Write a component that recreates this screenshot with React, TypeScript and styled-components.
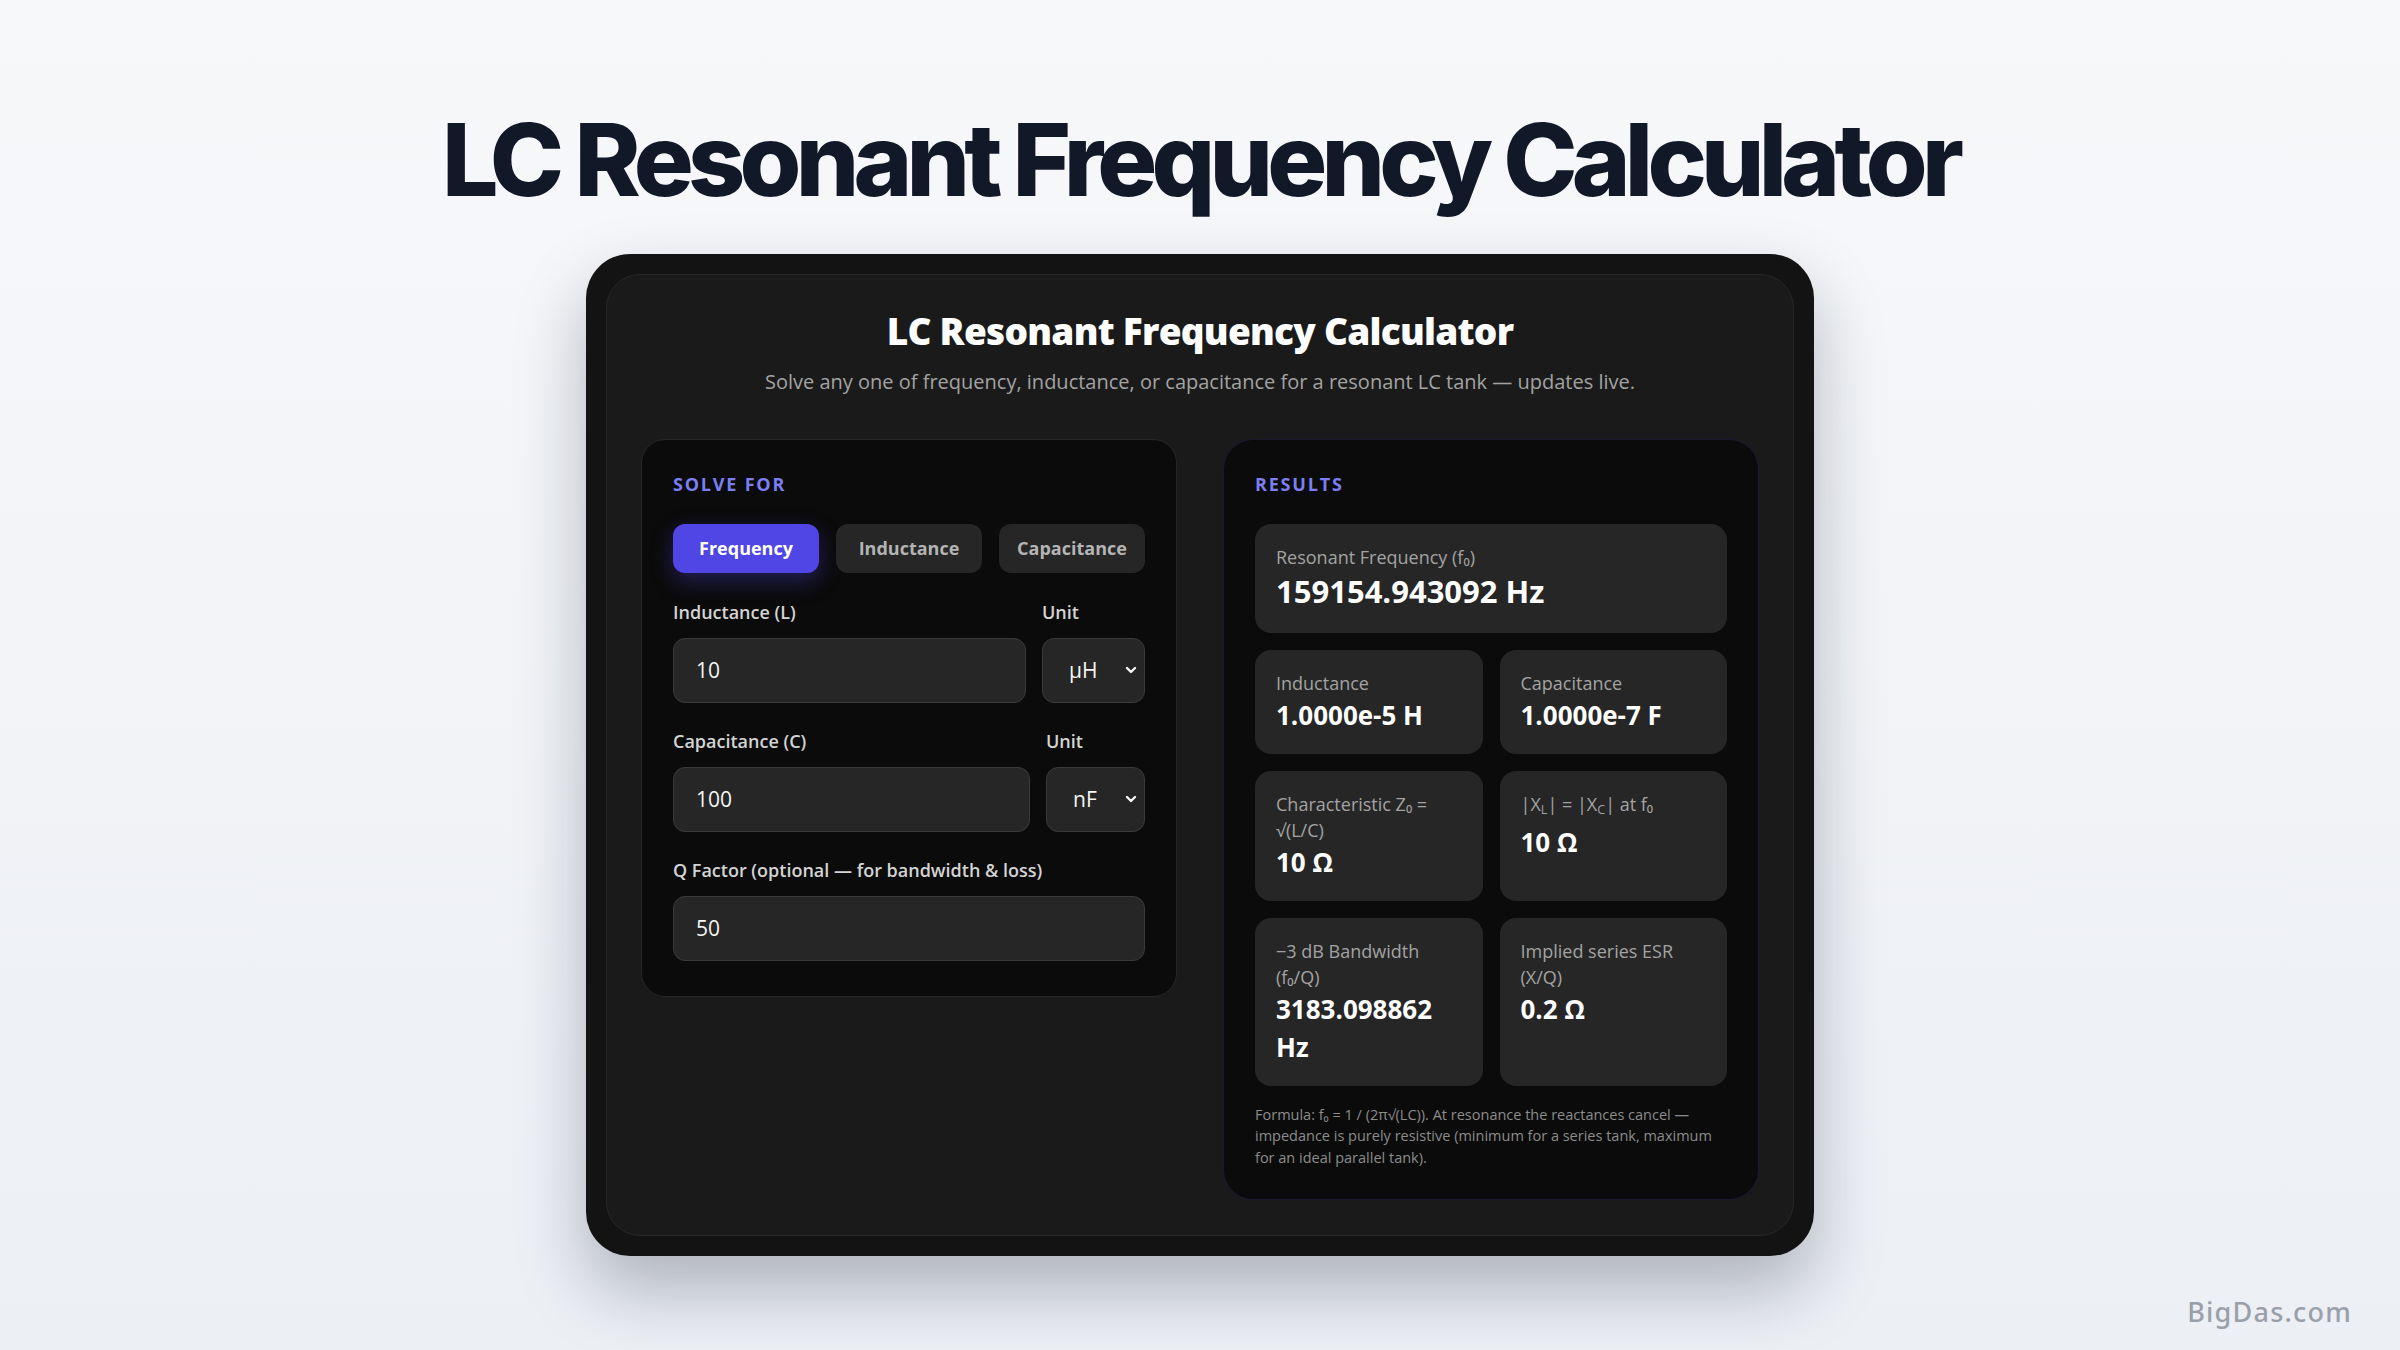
import { useState } from 'react';
import styled, { createGlobalStyle } from 'styled-components';

const GlobalStyle = createGlobalStyle`
  html, body {
    margin: 0;
    padding: 0;
  }
  body {
    background: linear-gradient(180deg, #f7f8fa 0%, #eceff4 100%);
    font-family: 'Open Sans', 'Noto Sans', sans-serif;
  }
  * {
    box-sizing: border-box;
  }
`;

const Page = styled.main`
  position: relative;
  min-height: 1350px;
  display: flex;
  flex-direction: column;
  align-items: center;
  padding-top: 108px;
`;

const PageTitle = styled.h1`
  margin: 0 0 42px;
  font-family: Inter, 'Liberation Sans', sans-serif;
  font-size: 100px;
  font-weight: 800;
  line-height: 1.04;
  letter-spacing: -0.058em;
  color: #111827;
`;

const Device = styled.div`
  width: 1228px;
  padding: 20px;
  background: #131313;
  border-radius: 44px;
  box-shadow: 0 34px 70px rgba(15, 23, 42, 0.28);
`;

const Screen = styled.div`
  background: #1a1a1a;
  border: 1px solid #272727;
  border-radius: 34px;
  padding: 31px 34px 35px;
`;

const Header = styled.header`
  text-align: center;
  margin-bottom: 42px;
`;

const AppTitle = styled.h2`
  margin: 0;
  font-size: 37px;
  font-weight: 800;
  line-height: 1.35;
  letter-spacing: -0.02em;
  color: #ffffff;
`;

const Subtitle = styled.p`
  margin: 11px 0 0;
  font-size: 20px;
  line-height: 1.5;
  color: #a3a3a3;
`;

const Panels = styled.div`
  display: grid;
  grid-template-columns: 1fr 1fr;
  gap: 46px;
  align-items: start;
`;

const Panel = styled.section<{ $accent?: boolean }>`
  background: #0b0b0b;
  border: 1px solid ${(p) => (p.$accent ? 'rgba(99, 102, 241, 0.16)' : '#262626')};
  border-radius: ${(p) => (p.$accent ? '30px' : '24px')};
  padding: ${(p) => (p.$accent ? '32px 31px 31px' : '32px 31px 35px')};
`;

const SectionLabel = styled.h3`
  margin: 0;
  font-size: 18px;
  font-weight: 700;
  line-height: 24px;
  letter-spacing: 0.1em;
  text-transform: uppercase;
  color: #7b7ff3;
`;

const ModeGroup = styled.div`
  display: grid;
  grid-template-columns: repeat(3, 1fr);
  gap: 17px;
  margin-top: 28px;
`;

const ModeButton = styled.button<{ $active?: boolean }>`
  height: 49px;
  border: none;
  border-radius: 12px;
  font-family: inherit;
  font-size: 18px;
  font-weight: 700;
  cursor: pointer;
  color: ${(p) => (p.$active ? '#ffffff' : '#b4b4b4')};
  background: ${(p) => (p.$active ? '#4f46e5' : '#262626')};
  box-shadow: ${(p) => (p.$active ? '0 8px 22px rgba(79, 70, 229, 0.35)' : 'none')};
`;

const Fields = styled.div`
  display: flex;
  flex-direction: column;
  gap: 26px;
  margin-top: 27px;
`;

const FieldRow = styled.div`
  display: grid;
  grid-template-columns: 1fr auto;
  gap: 16px;
`;

const Field = styled.label`
  display: flex;
  flex-direction: column;
  gap: 13px;
`;

const FieldLabel = styled.span`
  font-size: 18px;
  font-weight: 600;
  line-height: 25px;
  color: #d4d4d4;
`;

const TextInput = styled.input`
  width: 100%;
  height: 65px;
  padding: 0 22px;
  background: #262626;
  border: 1px solid #3a3a3a;
  border-radius: 12px;
  font-family: inherit;
  font-size: 21px;
  color: #f5f5f5;
  outline: none;
`;

const SelectWrap = styled.div`
  position: relative;
`;

const UnitSelect = styled.select`
  height: 65px;
  padding: 0 40px 0 26px;
  background: #262626;
  border: 1px solid #3a3a3a;
  border-radius: 12px;
  font-family: inherit;
  font-size: 21px;
  color: #f5f5f5;
  appearance: none;
  outline: none;
`;

const Chevron = styled.svg`
  position: absolute;
  right: 7px;
  top: 50%;
  width: 14px;
  height: 14px;
  transform: translateY(-50%);
  pointer-events: none;
`;

const ResultsStack = styled.div`
  display: flex;
  flex-direction: column;
  gap: 17px;
  margin-top: 28px;
`;

const ResultsGrid = styled.div`
  display: grid;
  grid-template-columns: 1fr 1fr;
  gap: 17px;
`;

const ResultCard = styled.div`
  background: #262626;
  border-radius: 16px;
  padding: 20px 21px;
`;

const ResultLabel = styled.div`
  font-size: 18px;
  line-height: 26px;
  color: #a3a3a3;

  sub {
    font-size: 0.7em;
    vertical-align: -0.25em;
  }
`;

const ResultValue = styled.div<{ $large?: boolean }>`
  font-size: ${(p) => (p.$large ? '31px' : '26px')};
  font-weight: 700;
  line-height: ${(p) => (p.$large ? '43px' : '38px')};
  color: #ffffff;
`;

const Note = styled.p`
  margin: 18px 0 0;
  font-size: 14.5px;
  line-height: 21.5px;
  color: #8c8c8c;
`;

const Watermark = styled.div`
  position: absolute;
  right: 48px;
  bottom: 20px;
  font-family: 'Noto Sans', 'Open Sans', sans-serif;
  font-size: 27px;
  font-weight: 500;
  letter-spacing: 0.045em;
  color: #9aa0aa;
`;

const L_UNITS: Record<string, number> = { H: 1, mH: 1e-3, 'µH': 1e-6, nH: 1e-9 };
const C_UNITS: Record<string, number> = { F: 1, mF: 1e-3, 'µF': 1e-6, nF: 1e-9, pF: 1e-12 };

const tidy = (v: number) => `${parseFloat(v.toPrecision(6))}`;

const ChevronIcon = () => (
  <Chevron viewBox="0 0 14 14">
    <path d="M3 5l4 4 4-4" fill="none" stroke="#f5f5f5" strokeWidth="2.4" strokeLinecap="round" strokeLinejoin="round" />
  </Chevron>
);

const App = () => {
  const [mode, setMode] = useState('Frequency');
  const [lVal, setLVal] = useState('10');
  const [lUnit, setLUnit] = useState('µH');
  const [cVal, setCVal] = useState('100');
  const [cUnit, setCUnit] = useState('nF');
  const [q, setQ] = useState('50');

  const L = parseFloat(lVal) * L_UNITS[lUnit];
  const C = parseFloat(cVal) * C_UNITS[cUnit];
  const f0 = 1 / (2 * Math.PI * Math.sqrt(L * C));
  const z0 = Math.sqrt(L / C);
  const x = 2 * Math.PI * f0 * L;
  const Q = parseFloat(q);

  return (
    <Page>
      <GlobalStyle />
      <PageTitle>LC Resonant Frequency Calculator</PageTitle>
      <Device>
        <Screen>
          <Header>
            <AppTitle>LC Resonant Frequency Calculator</AppTitle>
            <Subtitle>
              Solve any one of frequency, inductance, or capacitance for a resonant LC tank — updates live.
            </Subtitle>
          </Header>
          <Panels>
            <Panel>
              <SectionLabel>Solve for</SectionLabel>
              <ModeGroup>
                {['Frequency', 'Inductance', 'Capacitance'].map((m) => (
                  <ModeButton key={m} $active={mode === m} onClick={() => setMode(m)}>
                    {m}
                  </ModeButton>
                ))}
              </ModeGroup>
              <Fields>
                <FieldRow>
                  <Field>
                    <FieldLabel>Inductance (L)</FieldLabel>
                    <TextInput value={lVal} onChange={(e) => setLVal(e.target.value)} />
                  </Field>
                  <Field>
                    <FieldLabel>Unit</FieldLabel>
                    <SelectWrap>
                      <UnitSelect value={lUnit} onChange={(e) => setLUnit(e.target.value)}>
                        {Object.keys(L_UNITS).map((u) => (
                          <option key={u}>{u}</option>
                        ))}
                      </UnitSelect>
                      <ChevronIcon />
                    </SelectWrap>
                  </Field>
                </FieldRow>
                <FieldRow>
                  <Field>
                    <FieldLabel>Capacitance (C)</FieldLabel>
                    <TextInput value={cVal} onChange={(e) => setCVal(e.target.value)} />
                  </Field>
                  <Field>
                    <FieldLabel>Unit</FieldLabel>
                    <SelectWrap>
                      <UnitSelect value={cUnit} onChange={(e) => setCUnit(e.target.value)}>
                        {Object.keys(C_UNITS).map((u) => (
                          <option key={u}>{u}</option>
                        ))}
                      </UnitSelect>
                      <ChevronIcon />
                    </SelectWrap>
                  </Field>
                </FieldRow>
                <Field>
                  <FieldLabel>Q Factor (optional — for bandwidth &amp; loss)</FieldLabel>
                  <TextInput value={q} onChange={(e) => setQ(e.target.value)} />
                </Field>
              </Fields>
            </Panel>

            <Panel $accent>
              <SectionLabel>Results</SectionLabel>
              <ResultsStack>
                <ResultCard>
                  <ResultLabel>Resonant Frequency (f₀)</ResultLabel>
                  <ResultValue $large>{f0.toFixed(6)} Hz</ResultValue>
                </ResultCard>
                <ResultsGrid>
                  <ResultCard>
                    <ResultLabel>Inductance</ResultLabel>
                    <ResultValue>{L.toExponential(4)} H</ResultValue>
                  </ResultCard>
                  <ResultCard>
                    <ResultLabel>Capacitance</ResultLabel>
                    <ResultValue>{C.toExponential(4)} F</ResultValue>
                  </ResultCard>
                  <ResultCard>
                    <ResultLabel>Characteristic Z₀ = √(L/C)</ResultLabel>
                    <ResultValue>{tidy(z0)} Ω</ResultValue>
                  </ResultCard>
                  <ResultCard>
                    <ResultLabel>
                      |X<sub>L</sub>| = |X<sub>C</sub>| at f₀
                    </ResultLabel>
                    <ResultValue>{tidy(x)} Ω</ResultValue>
                  </ResultCard>
                  <ResultCard>
                    <ResultLabel>−3 dB Bandwidth (f₀/Q)</ResultLabel>
                    <ResultValue>{(f0 / Q).toFixed(6)} Hz</ResultValue>
                  </ResultCard>
                  <ResultCard>
                    <ResultLabel>Implied series ESR (X/Q)</ResultLabel>
                    <ResultValue>{tidy(x / Q)} Ω</ResultValue>
                  </ResultCard>
                </ResultsGrid>
              </ResultsStack>
              <Note>
                Formula: f₀ = 1 / (2π√(LC)). At resonance the reactances cancel — impedance is purely resistive
                (minimum for a series tank, maximum for an ideal parallel tank).
              </Note>
            </Panel>
          </Panels>
        </Screen>
      </Device>
      <Watermark>BigDas.com</Watermark>
    </Page>
  );
};

export default App;
